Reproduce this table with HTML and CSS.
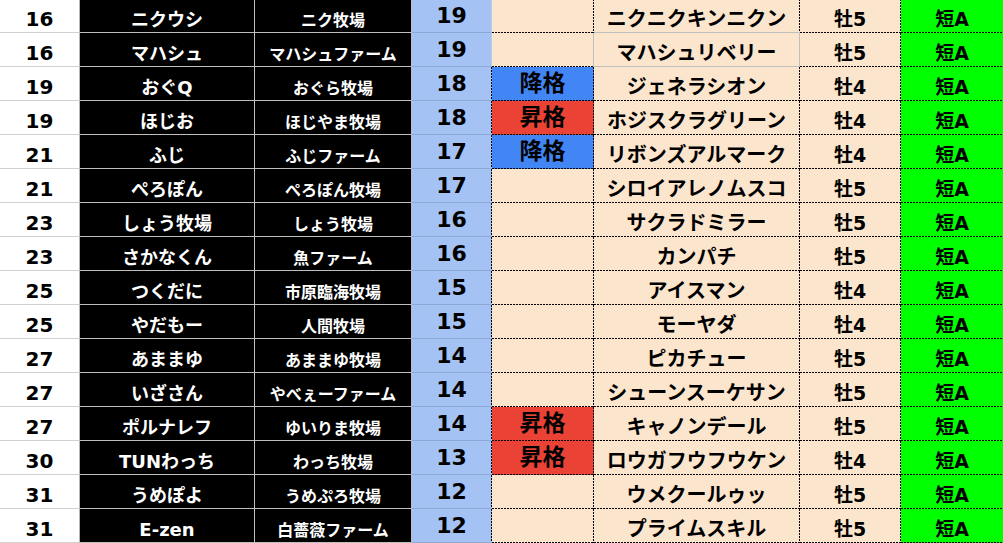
FILE: index.html
```html
<!DOCTYPE html>
<html lang="ja">
<head>
<meta charset="utf-8">
<title>ランキング表</title>
<link rel="stylesheet" href="styles.css">
</head>
<body>
<div class="sheet">
  <div class="row soft">
    <div class="c rank">16</div><div class="c owner">ニクウシ</div><div class="c farm">ニク牧場</div><div class="c num">19</div><div class="c move"></div><div class="c horse">ニクニクキンニクン</div><div class="c sex">牡5</div><div class="c dist">短A</div>
  </div>
  <div class="row soft boxed">
    <div class="c rank">16</div><div class="c owner">マハシュ</div><div class="c farm">マハシュファーム</div><div class="c num">19</div><div class="c move"></div><div class="c horse">マハシュリベリー</div><div class="c sex">牡5</div><div class="c dist">短A</div>
  </div>
  <div class="row">
    <div class="c rank">19</div><div class="c owner">おぐQ</div><div class="c farm">おぐら牧場</div><div class="c num">18</div><div class="c move down">降格</div><div class="c horse">ジェネラシオン</div><div class="c sex">牡4</div><div class="c dist">短A</div>
  </div>
  <div class="row">
    <div class="c rank">19</div><div class="c owner">ほじお</div><div class="c farm">ほじやま牧場</div><div class="c num">18</div><div class="c move up">昇格</div><div class="c horse">ホジスクラグリーン</div><div class="c sex">牡4</div><div class="c dist">短A</div>
  </div>
  <div class="row">
    <div class="c rank">21</div><div class="c owner">ふじ</div><div class="c farm">ふじファーム</div><div class="c num">17</div><div class="c move down">降格</div><div class="c horse">リボンズアルマーク</div><div class="c sex">牡4</div><div class="c dist">短A</div>
  </div>
  <div class="row">
    <div class="c rank">21</div><div class="c owner">ぺろぽん</div><div class="c farm">ぺろぽん牧場</div><div class="c num">17</div><div class="c move"></div><div class="c horse">シロイアレノムスコ</div><div class="c sex">牡5</div><div class="c dist">短A</div>
  </div>
  <div class="row">
    <div class="c rank">23</div><div class="c owner">しょう牧場</div><div class="c farm">しょう牧場</div><div class="c num">16</div><div class="c move"></div><div class="c horse">サクラドミラー</div><div class="c sex">牡5</div><div class="c dist">短A</div>
  </div>
  <div class="row">
    <div class="c rank">23</div><div class="c owner">さかなくん</div><div class="c farm">魚ファーム</div><div class="c num">16</div><div class="c move"></div><div class="c horse">カンパチ</div><div class="c sex">牡5</div><div class="c dist">短A</div>
  </div>
  <div class="row">
    <div class="c rank">25</div><div class="c owner">つくだに</div><div class="c farm">市原臨海牧場</div><div class="c num">15</div><div class="c move"></div><div class="c horse">アイスマン</div><div class="c sex">牡4</div><div class="c dist">短A</div>
  </div>
  <div class="row">
    <div class="c rank">25</div><div class="c owner">やだもー</div><div class="c farm">人間牧場</div><div class="c num">15</div><div class="c move"></div><div class="c horse">モーヤダ</div><div class="c sex">牡4</div><div class="c dist">短A</div>
  </div>
  <div class="row">
    <div class="c rank">27</div><div class="c owner">あままゆ</div><div class="c farm">あままゆ牧場</div><div class="c num">14</div><div class="c move"></div><div class="c horse">ピカチュー</div><div class="c sex">牡5</div><div class="c dist">短A</div>
  </div>
  <div class="row">
    <div class="c rank">27</div><div class="c owner">いざさん</div><div class="c farm">やべぇーファーム</div><div class="c num">14</div><div class="c move"></div><div class="c horse">シューンスーケサン</div><div class="c sex">牡5</div><div class="c dist">短A</div>
  </div>
  <div class="row">
    <div class="c rank">27</div><div class="c owner">ポルナレフ</div><div class="c farm">ゆいりま牧場</div><div class="c num">14</div><div class="c move up">昇格</div><div class="c horse">キャノンデール</div><div class="c sex">牡5</div><div class="c dist">短A</div>
  </div>
  <div class="row">
    <div class="c rank">30</div><div class="c owner">TUNわっち</div><div class="c farm">わっち牧場</div><div class="c num">13</div><div class="c move up">昇格</div><div class="c horse">ロウガフウフウケン</div><div class="c sex">牡4</div><div class="c dist">短A</div>
  </div>
  <div class="row">
    <div class="c rank">31</div><div class="c owner">うめぽよ</div><div class="c farm">うめぷろ牧場</div><div class="c num">12</div><div class="c move"></div><div class="c horse">ウメクールゥッ</div><div class="c sex">牡5</div><div class="c dist">短A</div>
  </div>
  <div class="row">
    <div class="c rank">31</div><div class="c owner">E-zen</div><div class="c farm">白薔薇ファーム</div><div class="c num">12</div><div class="c move"></div><div class="c horse">プライムスキル</div><div class="c sex">牡5</div><div class="c dist">短A</div>
  </div>
</div>
</body>
</html>
```
FILE: styles.css
```css
html, body {
  margin: 0;
  padding: 0;
  background: #fff;
  overflow: hidden;
}

.sheet {
  margin-top: -1px;
  font-family: "DejaVu Sans", "Noto Sans CJK JP", sans-serif;
  font-weight: bold;
  color: #000;
  --dv: linear-gradient(to bottom, #000 2px, transparent 2px);
  --dh: linear-gradient(to right, #000 2px, transparent 2px);
}

.row {
  display: grid;
  grid-template-columns: 80px 175px 157px 80px 102px 206px 101px 103px;
  height: 34px;
}

.c {
  --bg: #fff;
  --r: none;
  --b: none;
  box-sizing: border-box;
  display: flex;
  justify-content: center;
  align-items: flex-end;
  padding-bottom: 3px;
  line-height: 1;
  white-space: nowrap;
  overflow: hidden;
  border-right: 1px solid #bfbfbf;
  border-bottom: 1px solid #bfbfbf;
  background:
    var(--r) right top / 1px 3px repeat-y border-box,
    var(--b) left bottom / 3px 1px repeat-x border-box,
    var(--bg);
}

.rank {
  font-size: 20px;
  border-right-color: #b4b4b4;
  border-bottom-color: #d0d0d0;
}

.owner {
  --bg: #000;
  color: #fff;
  font-size: 18px;
}

.farm {
  --bg: #000;
  color: #fff;
  font-size: 16px;
}

.num {
  --bg: #a4c2f4;
  --r: var(--dv);
  font-size: 22px;
  align-items: center;
  padding-bottom: 0;
  border-bottom-color: #8fa9d6;
  border-right-color: transparent;
}

.soft .num {
  --r: none;
  border-right-color: #b6cbee;
}

.move {
  --bg: #fce5cd;
  --r: var(--dv);
  --b: var(--dh);
  font-size: 23px;
  align-items: center;
  padding-bottom: 0;
  border-color: transparent;
}

.move.up {
  --bg: #ea4335;
}

.move.down {
  --bg: #4285f4;
}

.horse,
.sex,
.dist {
  --bg: #fce5cd;
  --r: var(--dv);
  --b: var(--dh);
  border-right-color: transparent;
  border-bottom-color: transparent;
}

.horse {
  font-size: 20px;
}

.sex {
  font-size: 19px;
}

.dist {
  --bg: #00ff00;
  font-size: 19px;
}

.soft .horse {
  --b: none;
  border-bottom-color: #bfbfbf;
}

.boxed .move {
  --r: none;
  border-right-color: #bfbfbf;
}

.boxed .horse {
  --r: none;
  border-right-color: #bfbfbf;
}
```
